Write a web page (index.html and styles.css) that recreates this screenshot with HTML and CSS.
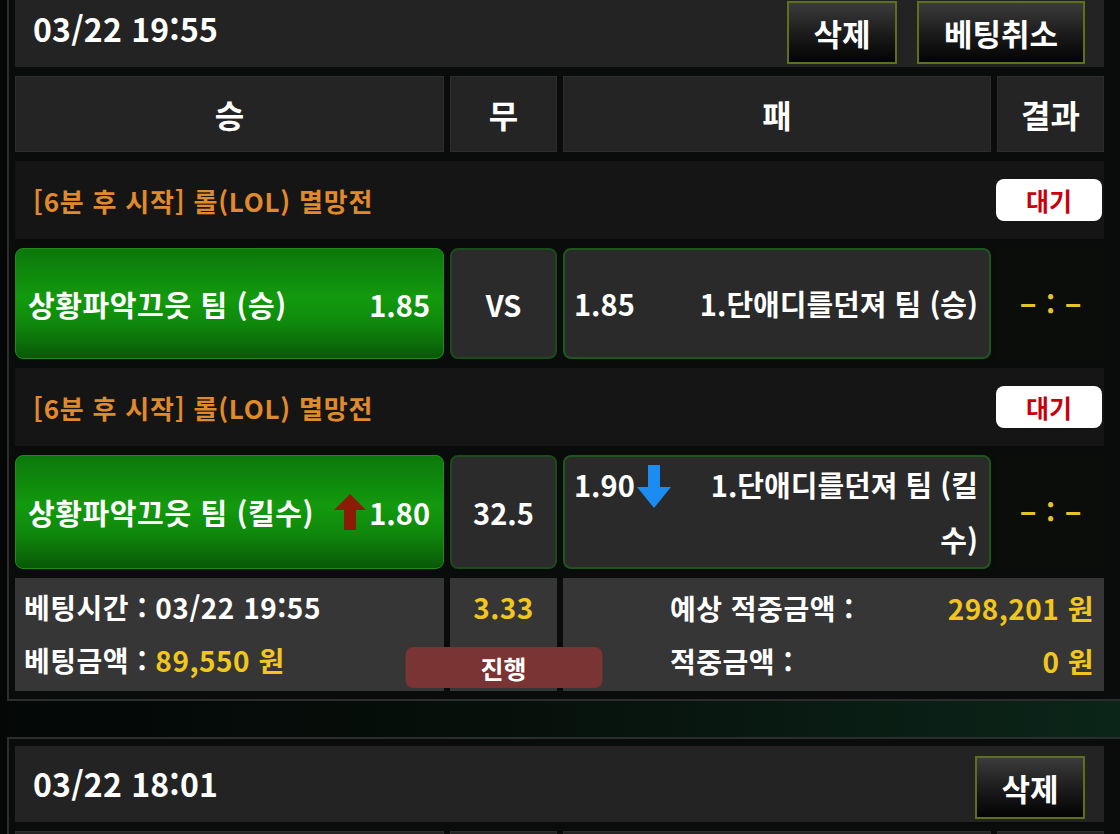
FILE: index.html
```html
<!DOCTYPE html>
<html lang="ko">
<head>
<meta charset="utf-8">
<title>베팅내역</title>
<link rel="stylesheet" href="styles.css">
</head>
<body>
<div class="page">

  <section class="panel panel-first">
    <div class="panel-head">
      <span class="stamp">03/22 19:55</span>
      <div class="actions">
        <button class="btn">삭제</button>
        <button class="btn btn-wide">베팅취소</button>
      </div>
    </div>

    <div class="grid">
      <div class="col-head">승</div>
      <div class="col-head">무</div>
      <div class="col-head">패</div>
      <div class="col-head">결과</div>
    </div>

    <div class="league">
      <span class="league-name">[6분 후 시작] 롤(LOL) 멸망전</span>
      <span class="status">대기</span>
    </div>
    <div class="grid match">
      <div class="pick win">
        <span class="team">상황파악끄읏 팀 (승)</span>
        <span class="odds">1.85</span>
      </div>
      <div class="pick draw">VS</div>
      <div class="pick lose">
        <div class="lose-inner"><span class="lose-odds">1.85</span>1.단애디를던져 팀 (승)</div>
      </div>
      <div class="score"><span class="dash">-</span><span class="colon">:</span><span class="dash">-</span></div>
    </div>

    <div class="league">
      <span class="league-name">[6분 후 시작] 롤(LOL) 멸망전</span>
      <span class="status">대기</span>
    </div>
    <div class="grid match">
      <div class="pick win">
        <span class="team">상황파악끄읏 팀 (킬수)</span>
        <span class="odds">
          <svg class="arrow" width="32" height="36" viewBox="0 0 32 36"><polygon fill="#8c1c06" points="16,0 32,16 22,16 22,36 10,36 10,16 0,16"/></svg>1.80
        </span>
      </div>
      <div class="pick draw">32.5</div>
      <div class="pick lose">
        <div class="lose-inner"><span class="lose-odds">1.90<svg class="arrow" width="34" height="43" viewBox="0 0 34 43"><polygon fill="#1a8cf2" points="11,0 23,0 23,22 34,22 17,43 0,22 11,22"/></svg></span>1.단애디를던져 팀 (킬수)</div>
      </div>
      <div class="score"><span class="dash">-</span><span class="colon">:</span><span class="dash">-</span></div>
    </div>

    <div class="grid summary">
      <div class="sum-box sum-left">
        <div class="sum-line">베팅시간 : 03/22 19:55</div>
        <div class="sum-line">베팅금액 : <span class="gold">89,550 원</span></div>
      </div>
      <div class="sum-box sum-mid">
        <div class="sum-line gold">3.33</div>
        <span class="progress">진행</span>
      </div>
      <div class="sum-box sum-right">
        <div class="sum-row"><span>예상 적중금액 :</span><span class="gold">298,201 원</span></div>
        <div class="sum-row"><span>적중금액 :</span><span class="gold">0 원</span></div>
      </div>
    </div>
  </section>

  <section class="panel panel-next">
    <div class="panel-head">
      <span class="stamp">03/22 18:01</span>
      <div class="actions">
        <button class="btn">삭제</button>
      </div>
    </div>
    <div class="grid">
      <div class="col-head"></div>
      <div class="col-head"></div>
      <div class="col-head"></div>
      <div class="col-head"></div>
    </div>
  </section>

</div>
</body>
</html>
```

FILE: styles.css
```css
html, body {
  margin: 0;
  padding: 0;
}

body {
  height: 834px;
  overflow: hidden;
  background: linear-gradient(90deg, #040706 0%, #06100b 45%, #0b2519 100%);
  font-family: "Noto Sans CJK KR", "Noto Sans", sans-serif;
  font-weight: 700;
  color: #ffffff;
}

.page {
  padding-left: 7px;
}

/* one bet slip */
.panel {
  box-sizing: content-box;
  width: 1089px;
  padding: 7px 30px 8px 6px;
  border: 2px solid #2c2e2d;
  background: #0a0b0b;
  display: flex;
  flex-direction: column;
  gap: 9px;
}

.panel-first {
  margin-top: -18px;
}

.panel-next {
  margin-top: 36px;
}

.panel-head {
  height: 76px;
  box-sizing: border-box;
  background: #232323;
  display: flex;
  align-items: center;
  justify-content: space-between;
  padding: 0 19px 0 18px;
}

.stamp {
  font-size: 32px;
  letter-spacing: 0.2px;
  margin-top: -3px;
}

.actions {
  display: flex;
  gap: 20px;
  margin-top: 7px;
}

.btn {
  width: 110px;
  height: 63px;
  border: 2px solid #5f701d;
  background: linear-gradient(180deg, #3b3b3b 0%, #1a1a1a 55%, #030303 100%);
  color: #ffffff;
  font-family: inherit;
  font-weight: 700;
  font-size: 31px;
  padding: 0;
}

.btn-wide {
  width: 168px;
}

/* four columns: 승 / 무 / 패 / 결과 */
.grid {
  display: grid;
  grid-template-columns: 429px 107px 428px 107px;
  column-gap: 6px;
}

.col-head {
  height: 76px;
  box-sizing: border-box;
  background: #242424;
  border: 1px solid #2d2d2d;
  display: flex;
  align-items: center;
  justify-content: center;
  font-size: 32px;
}

.league {
  height: 78px;
  box-sizing: border-box;
  background: #151515;
  display: flex;
  align-items: center;
  justify-content: space-between;
  padding: 0 2px 0 18px;
}

.league-name {
  color: #e08a2c;
  font-size: 26px;
  letter-spacing: 0.8px;
}

.status {
  width: 106px;
  height: 42px;
  background: #ffffff;
  border-radius: 8px;
  color: #c8000c;
  font-size: 25px;
  display: flex;
  align-items: center;
  justify-content: center;
}

.match {
  min-height: 111px;
}

.pick {
  box-sizing: border-box;
  border-radius: 8px;
  font-size: 29px;
  display: flex;
  align-items: center;
}

.win {
  background: linear-gradient(180deg, #0c780b 0%, #139a0e 45%, #0f870c 70%, #095807 100%);
  border: 1px solid #1f8c1a;
  justify-content: space-between;
  padding: 0 13px 0 12px;
}

.team {
  letter-spacing: 0.6px;
}

.odds {
  display: flex;
  align-items: center;
  gap: 3px;
}

.draw {
  background: #2b2b2b;
  border: 2px solid #1b4a1b;
  justify-content: center;
}

.lose {
  background: #2a2a2a;
  border: 2px solid #1e571c;
  padding: 0 11px 0 9px;
}

.lose-inner {
  width: 100%;
  text-align: right;
  line-height: 55px;
}

.lose-odds {
  float: left;
  width: 100px;
  height: 55px;
  display: flex;
  align-items: center;
  gap: 2px;
  text-align: left;
}

.lose-odds .arrow {
  margin-top: 4px;
}

/* score placeholder "- : -" */
.score {
  background: #0a0d0a;
  display: flex;
  align-items: center;
  justify-content: center;
  gap: 13px;
  color: #e6c22c;
  font-size: 28px;
}

.dash {
  display: inline-block;
  transform: scaleX(1.8);
}

.colon {
  margin-top: -2px;
}

/* totals row */
.summary {
  height: 113px;
}

.sum-box {
  background: #363636;
  box-sizing: border-box;
  padding: 3px 0;
  font-size: 28px;
  letter-spacing: 0.5px;
}

.sum-line {
  height: 53px;
  line-height: 53px;
}

.sum-left {
  padding-left: 9px;
}

.sum-mid {
  position: relative;
  text-align: center;
}

.progress {
  position: absolute;
  left: 50%;
  bottom: 3px;
  transform: translateX(-50%);
  width: 197px;
  height: 41px;
  border-radius: 8px;
  background: #7a3434;
  display: flex;
  align-items: center;
  justify-content: center;
  font-size: 25px;
  letter-spacing: 0;
}

.sum-right {
  grid-column: span 2;
  padding-left: 107px;
  padding-right: 10px;
}

.sum-row {
  height: 53px;
  display: flex;
  align-items: center;
  justify-content: space-between;
}

.gold {
  color: #f1c71d;
}
```
